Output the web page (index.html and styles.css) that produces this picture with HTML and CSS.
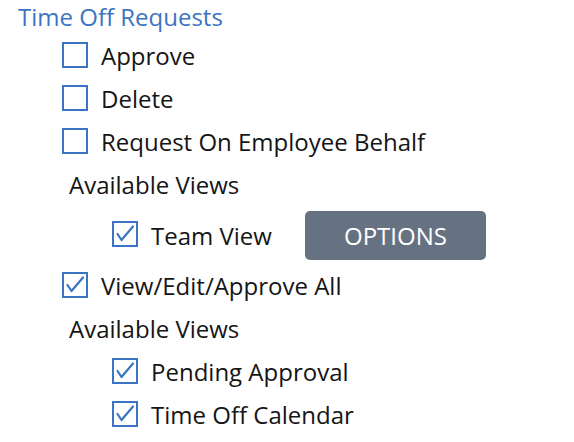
FILE: index.html
```html
<!DOCTYPE html>
<html lang="en">
<head>
  <meta charset="UTF-8">
  <meta name="viewport" content="width=device-width, initial-scale=1.0">
  <title>Time Off Requests</title>
  <link rel="stylesheet" href="styles.css">
</head>
<body>
  <div class="panel">
    <h2 class="section-title">Time Off Requests</h2>

    <div class="perm level-1">
      <span class="box"></span>
      <span class="label">Approve</span>
    </div>
    <div class="perm level-1">
      <span class="box"></span>
      <span class="label">Delete</span>
    </div>
    <div class="perm level-1">
      <span class="box"></span>
      <span class="label">Request On Employee Behalf</span>
    </div>
    <div class="views-title">Available Views</div>
    <div class="perm level-2 with-button">
      <span class="box checked">
        <svg viewBox="0 0 22 22"><path d="M3.5 11l4 6L19 3.5" /></svg>
      </span>
      <span class="label">Team View</span>
      <button class="options-btn">OPTIONS</button>
    </div>

    <div class="perm level-1">
      <span class="box checked">
        <svg viewBox="0 0 22 22"><path d="M3.5 11l4 6L19 3.5" /></svg>
      </span>
      <span class="label">View/Edit/Approve All</span>
    </div>
    <div class="views-title">Available Views</div>
    <div class="perm level-2">
      <span class="box checked">
        <svg viewBox="0 0 22 22"><path d="M3.5 11l4 6L19 3.5" /></svg>
      </span>
      <span class="label">Pending Approval</span>
    </div>
    <div class="perm level-2">
      <span class="box checked">
        <svg viewBox="0 0 22 22"><path d="M3.5 11l4 6L19 3.5" /></svg>
      </span>
      <span class="label">Time Off Calendar</span>
    </div>
  </div>
</body>
</html>
```

FILE: styles.css
```css
body {
  margin: 0;
  background-color: #fff;
  font-family: "Open Sans", "Noto Sans", Arial, sans-serif;
  color: #151515;
}
.panel {
  padding: 0 0 0 18px;
}
.section-title {
  margin: 0 0 1px;
  font-size: 24px;
  font-weight: 400;
  line-height: 33px;
  color: #3a74c2;
}
.perm {
  display: flex;
  align-items: center;
  height: 43px;
  font-size: 24px;
}
.perm.level-1 {
  padding-left: 44px;
}
.perm.level-2 {
  padding-left: 94px;
}
.perm.with-button {
  height: 58px;
}
.box {
  box-sizing: border-box;
  width: 26px;
  height: 26px;
  border: 2px solid #3a74c2;
  margin-right: 13px;
  flex-shrink: 0;
  margin-top: -2px;
}
.box svg {
  display: block;
  width: 22px;
  height: 22px;
}
.box svg path {
  fill: none;
  stroke: #3a74c2;
  stroke-width: 2.2;
  stroke-linecap: round;
  stroke-linejoin: round;
}
.views-title {
  height: 43px;
  line-height: 43px;
  padding-left: 51px;
  font-size: 24px;
}
.options-btn {
  margin-left: 33px;
  width: 181px;
  height: 49px;
  border: none;
  border-radius: 5px;
  background-color: #667281;
  color: #fff;
  font-family: inherit;
  font-size: 24px;
  cursor: pointer;
}
```
